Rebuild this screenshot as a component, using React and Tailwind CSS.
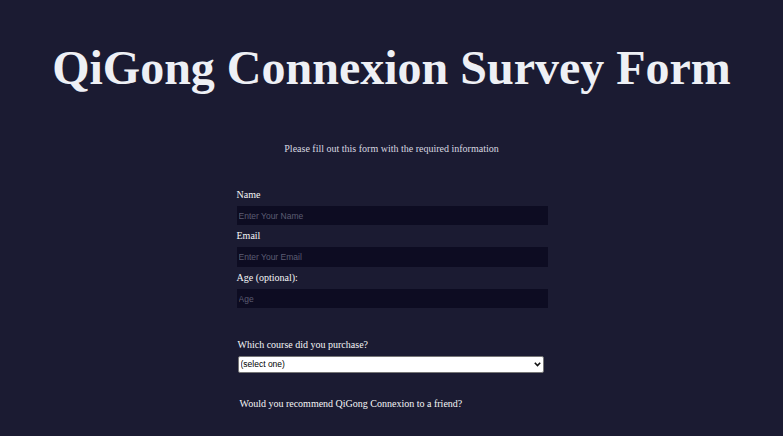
import React from 'react';

export default function App() {
  return (
    <div className="min-h-screen bg-[#1b1b32] text-[#f5f6f7] font-[family-name:'Liberation_Serif',serif]">
      <h1 className="pt-[40px] text-center text-[48px] font-bold leading-[56px] text-[#eef0f5]">
        QiGong Connexion Survey Form
      </h1>

      <p className="mt-[46px] text-center text-[10px] leading-[14px] text-[#d8d8e0]">
        Please fill out this form with the required information
      </p>

      <form className="mx-auto mt-[32px] w-[312px] pl-[1px]">
        <div className="flex flex-col">
          <label className="text-[10px] leading-[14px]">Name</label>
          <input
            type="text"
            placeholder="Enter Your Name"
            className="mt-[4px] h-[19px] bg-[#0d0c22] px-[2px] font-[family-name:'Liberation_Sans',sans-serif] text-[8.5px] outline-none placeholder:text-[#5c5c72]"
          />
          <label className="mt-[4px] text-[10px] leading-[14px]">Email</label>
          <input
            type="email"
            placeholder="Enter Your Email"
            className="mt-[4px] h-[20px] bg-[#0d0c22] px-[2px] font-[family-name:'Liberation_Sans',sans-serif] text-[8.5px] outline-none placeholder:text-[#5c5c72]"
          />
          <label className="mt-[4px] text-[10px] leading-[14px]">Age (optional):</label>
          <input
            type="number"
            placeholder="Age"
            className="mt-[4px] h-[19px] bg-[#0d0c22] px-[2px] font-[family-name:'Liberation_Sans',sans-serif] text-[8.5px] outline-none placeholder:text-[#5c5c72]"
          />
        </div>

        <div className="mt-[30px] flex flex-col">
          <label className="pl-[1px] text-[10px] leading-[14px]">Which course did you purchase?</label>
          <div className="relative mt-[4px] ml-[1px] w-[306px]">
            <select className="block h-[17px] w-full appearance-none rounded-[2px] border border-[#767676] bg-white px-[2px] font-[family-name:'Liberation_Sans',sans-serif] text-[8.5px] text-black outline-none">
              <option>(select one)</option>
              <option>Beginner</option>
              <option>Intermediate</option>
              <option>Advanced</option>
            </select>
            <svg
              className="pointer-events-none absolute right-[3px] top-[6px]"
              width="7"
              height="5"
              viewBox="0 0 7 5"
            >
              <path d="M0.8 0.8 L3.5 3.6 L6.2 0.8" fill="none" stroke="#111" strokeWidth="1.6" />
            </svg>
          </div>
        </div>

        <p className="mt-[24px] pl-[3px] text-[10px] leading-[14px]">
          Would you recommend QiGong Connexion to a friend?
        </p>
      </form>
    </div>
  );
}
